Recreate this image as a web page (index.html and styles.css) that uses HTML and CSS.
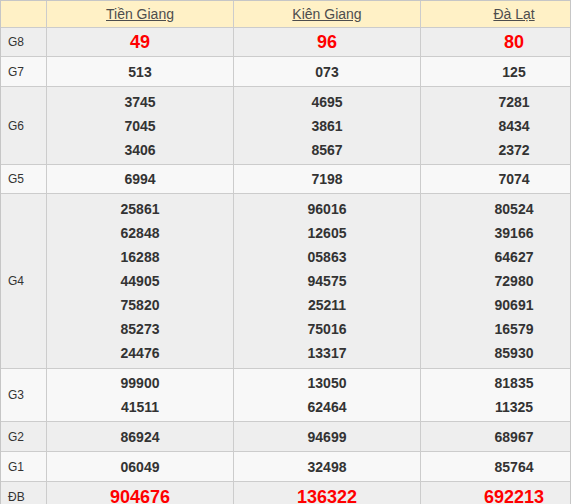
FILE: index.html
```html
<!DOCTYPE html>
<html lang="vi">
<head>
<meta charset="utf-8">
<title>Kết quả xổ số</title>
<link rel="stylesheet" href="styles.css">
</head>
<body>
<div class="frame">
  <div class="results">
    <div class="cell head label"></div>
    <div class="cell head"><a href="#">Tiền Giang</a></div>
    <div class="cell head"><a href="#">Kiên Giang</a></div>
    <div class="cell head"><a href="#">Đà Lạt</a></div>

    <div class="cell label alt">G8</div>
    <div class="cell alt"><span class="num big">49</span></div>
    <div class="cell alt"><span class="num big">96</span></div>
    <div class="cell alt"><span class="num big">80</span></div>

    <div class="cell label">G7</div>
    <div class="cell"><span class="num">513</span></div>
    <div class="cell"><span class="num">073</span></div>
    <div class="cell"><span class="num">125</span></div>

    <div class="cell label alt">G6</div>
    <div class="cell alt"><span class="num">3745</span><span class="num">7045</span><span class="num">3406</span></div>
    <div class="cell alt"><span class="num">4695</span><span class="num">3861</span><span class="num">8567</span></div>
    <div class="cell alt"><span class="num">7281</span><span class="num">8434</span><span class="num">2372</span></div>

    <div class="cell label">G5</div>
    <div class="cell"><span class="num">6994</span></div>
    <div class="cell"><span class="num">7198</span></div>
    <div class="cell"><span class="num">7074</span></div>

    <div class="cell label alt">G4</div>
    <div class="cell alt"><span class="num">25861</span><span class="num">62848</span><span class="num">16288</span><span class="num">44905</span><span class="num">75820</span><span class="num">85273</span><span class="num">24476</span></div>
    <div class="cell alt"><span class="num">96016</span><span class="num">12605</span><span class="num">05863</span><span class="num">94575</span><span class="num">25211</span><span class="num">75016</span><span class="num">13317</span></div>
    <div class="cell alt"><span class="num">80524</span><span class="num">39166</span><span class="num">64627</span><span class="num">72980</span><span class="num">90691</span><span class="num">16579</span><span class="num">85930</span></div>

    <div class="cell label">G3</div>
    <div class="cell"><span class="num">99900</span><span class="num">41511</span></div>
    <div class="cell"><span class="num">13050</span><span class="num">62464</span></div>
    <div class="cell"><span class="num">81835</span><span class="num">11325</span></div>

    <div class="cell label alt">G2</div>
    <div class="cell alt"><span class="num">86924</span></div>
    <div class="cell alt"><span class="num">94699</span></div>
    <div class="cell alt"><span class="num">68967</span></div>

    <div class="cell label">G1</div>
    <div class="cell"><span class="num">06049</span></div>
    <div class="cell"><span class="num">32498</span></div>
    <div class="cell"><span class="num">85764</span></div>

    <div class="cell label alt">ĐB</div>
    <div class="cell alt"><span class="num big">904676</span></div>
    <div class="cell alt"><span class="num big">136322</span></div>
    <div class="cell alt"><span class="num big">692213</span></div>
  </div>
</div>
</body>
</html>
```

FILE: styles.css
```css
html, body {
  margin: 0;
  padding: 0;
  background: #ffffff;
}

body {
  font-family: "Liberation Sans", Arial, sans-serif;
}

.frame {
  width: 571px;
  box-sizing: border-box;
  border: 1px solid #c6c6c6;
  border-bottom: none;
  overflow: hidden;
}

.results {
  display: grid;
  width: 607px;
  grid-template-columns: 46px 187px 187px 187px;
  grid-template-rows: 27px 29px 30px 78px 29px 175px 53px 30px 30px 30px;
}

.cell {
  box-sizing: border-box;
  border-right: 1px solid #cccccc;
  border-bottom: 1px solid #cccccc;
  background: #f8f8f8;
  display: flex;
  flex-direction: column;
  align-items: center;
  justify-content: center;
}

.cell.alt {
  background: #eeeeee;
}

.cell.head {
  background: #fff1c6;
}

.cell.label {
  align-items: flex-start;
  padding-left: 7px;
  font-size: 12px;
  color: #333333;
}

.head a {
  color: #4d4d4d;
  font-size: 14px;
  text-decoration: underline;
}

.num {
  display: block;
  font-size: 14px;
  font-weight: bold;
  line-height: 24px;
  color: #333333;
}

.num.big {
  font-size: 18px;
  color: #ff0000;
}
```
